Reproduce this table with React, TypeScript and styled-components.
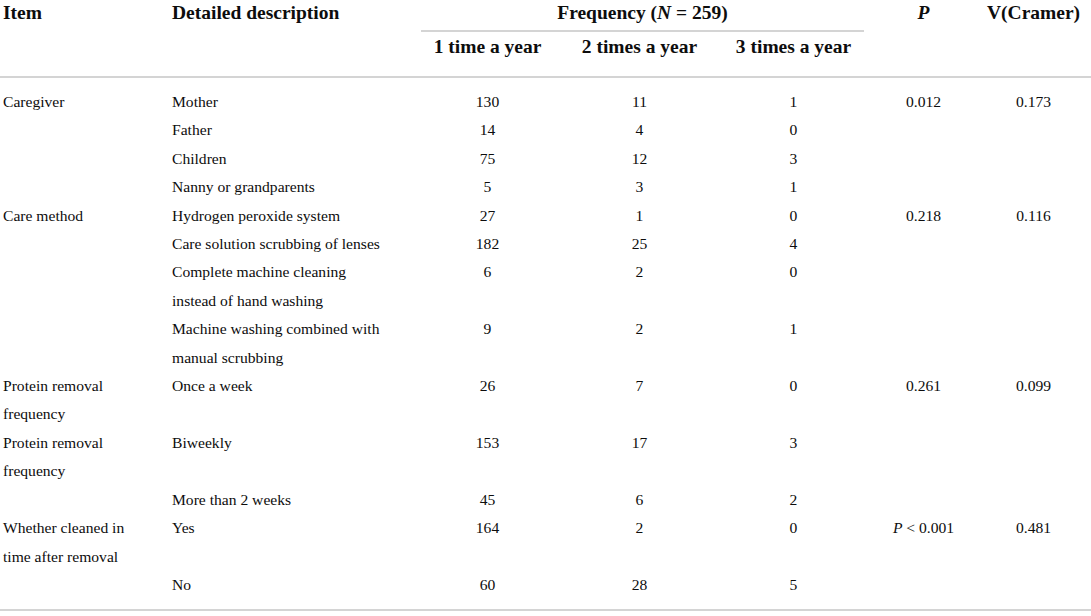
import React from "react";
import styled, { createGlobalStyle } from "styled-components";

const GlobalStyle = createGlobalStyle`
  html, body {
    margin: 0;
    padding: 0;
    background: #ffffff;
  }
  body {
    font-family: "Liberation Serif", "Times New Roman", serif;
    color: #0d0d0d;
  }
`;

type Row = {
  item?: string;
  desc: string;
  counts: [string, string, string];
  p?: React.ReactNode;
  v?: string;
};

const rows: Row[] = [
  { item: "Caregiver", desc: "Mother", counts: ["130", "11", "1"], p: "0.012", v: "0.173" },
  { desc: "Father", counts: ["14", "4", "0"] },
  { desc: "Children", counts: ["75", "12", "3"] },
  { desc: "Nanny or grandparents", counts: ["5", "3", "1"] },
  { item: "Care method", desc: "Hydrogen peroxide system", counts: ["27", "1", "0"], p: "0.218", v: "0.116" },
  { desc: "Care solution scrubbing of lenses", counts: ["182", "25", "4"] },
  { desc: "Complete machine cleaning instead of hand washing", counts: ["6", "2", "0"] },
  { desc: "Machine washing combined with manual scrubbing", counts: ["9", "2", "1"] },
  { item: "Protein removal frequency", desc: "Once a week", counts: ["26", "7", "0"], p: "0.261", v: "0.099" },
  { item: "Protein removal frequency", desc: "Biweekly", counts: ["153", "17", "3"] },
  { desc: "More than 2 weeks", counts: ["45", "6", "2"] },
  {
    item: "Whether cleaned in time after removal",
    desc: "Yes",
    counts: ["164", "2", "0"],
    p: (
      <>
        <i>P</i> &lt; 0.001
      </>
    ),
    v: "0.481",
  },
  { desc: "No", counts: ["60", "28", "5"] },
];

const Table = styled.table`
  width: 1091px;
  table-layout: fixed;
  border-collapse: collapse;
  border-spacing: 0;
`;

const Head = styled.thead`
  border-bottom: 2px solid #d4d4d4;
`;

const Body = styled.tbody`
  border-bottom: 2px solid #d4d4d4;
`;

const HeadCell = styled.th<{ $align?: "left" | "center"; $sub?: boolean }>`
  font-size: 19.5px;
  font-weight: bold;
  text-align: ${(p) => p.$align || "center"};
  vertical-align: top;
  line-height: ${(p) => (p.$sub ? "28px" : "26px")};
  padding: ${(p) => (p.$sub ? "1px 0 15px" : "0")};
  padding-left: ${(p) => (p.$align === "left" ? "3px" : "0")};
  white-space: nowrap;
`;

const GroupLabel = styled.div`
  margin: 0 7px 0 9px;
  padding-bottom: 4px;
  border-bottom: 2px solid #d4d4d4;
`;

const Cell = styled.td<{ $align?: "left" | "center" }>`
  font-size: 15.6px;
  line-height: 28.4px;
  vertical-align: top;
  text-align: ${(p) => p.$align || "center"};
  padding: 0;
  padding-left: ${(p) => (p.$align === "left" ? "3px" : "0")};

  tr:first-child > & {
    padding-top: 10px;
  }
  tr:last-child > & {
    padding-bottom: 10px;
  }
`;

const Wrap = styled.div<{ $max: number }>`
  max-width: ${(p) => p.$max}px;
`;

export default function App() {
  return (
    <>
      <GlobalStyle />
      <Table>
        <colgroup>
          <col style={{ width: 169 }} />
          <col style={{ width: 243 }} />
          <col style={{ width: 151 }} />
          <col style={{ width: 153 }} />
          <col style={{ width: 155 }} />
          <col style={{ width: 105 }} />
          <col style={{ width: 115 }} />
        </colgroup>
        <Head>
          <tr>
            <HeadCell $align="left" rowSpan={2}>Item</HeadCell>
            <HeadCell $align="left" rowSpan={2}>Detailed description</HeadCell>
            <HeadCell colSpan={3}>
              <GroupLabel>
                Frequency (<i>N</i> = 259)
              </GroupLabel>
            </HeadCell>
            <HeadCell rowSpan={2}>
              <i>P</i>
            </HeadCell>
            <HeadCell rowSpan={2}>V(Cramer)</HeadCell>
          </tr>
          <tr>
            <HeadCell $sub>1 time a year</HeadCell>
            <HeadCell $sub>2 times a year</HeadCell>
            <HeadCell $sub>3 times a year</HeadCell>
          </tr>
        </Head>
        <Body>
          {rows.map((r, i) => (
            <tr key={i}>
              <Cell $align="left">
                <Wrap $max={135}>{r.item}</Wrap>
              </Cell>
              <Cell $align="left">
                <Wrap $max={214}>{r.desc}</Wrap>
              </Cell>
              {r.counts.map((c, j) => (
                <Cell key={j}>{c}</Cell>
              ))}
              <Cell>{r.p}</Cell>
              <Cell>{r.v}</Cell>
            </tr>
          ))}
        </Body>
      </Table>
    </>
  );
}
